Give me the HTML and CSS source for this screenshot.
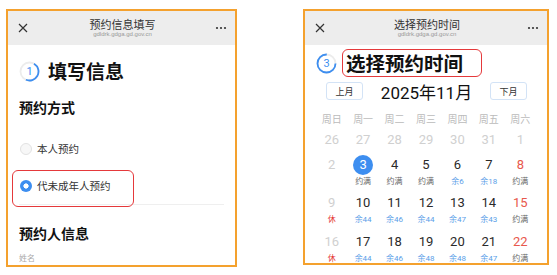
FILE: index.html
```html
<!DOCTYPE html>
<html lang="zh-CN">
<head>
<meta charset="utf-8">
<link rel="stylesheet" href="styles.css">
</head>
<body>
<div class="stage">
  <div class="phone phone-left">
    <div class="nav">
      <span class="nav-icon"><svg width="10" height="10" viewBox="0 0 10 10"><path d="M1 1L9 9M9 1L1 9" stroke="#333" stroke-width="1.2" fill="none"/></svg></span>
      <div class="nav-title"><div class="nav-name">预约信息填写</div><div class="nav-url">gdldrk.gdga.gd.gov.cn</div></div>
      <span class="nav-icon"><svg width="12" height="4" viewBox="0 0 12 4"><circle cx="2" cy="2" r="1.1" fill="#333"/><circle cx="6" cy="2" r="1.1" fill="#333"/><circle cx="10" cy="2" r="1.1" fill="#333"/></svg></span>
    </div>
    <div class="content">
      <div class="step">
        <svg class="step-ring" width="21" height="21" viewBox="0 0 21 21"><circle cx="10.5" cy="10.5" r="9" fill="none" stroke="#ececec" stroke-width="1.8"/><circle cx="10.5" cy="10.5" r="9" fill="none" stroke="#3d8ef0" stroke-width="1.8" stroke-dasharray="27 60" transform="rotate(-60 10.5 10.5)"/><text x="10.5" y="14.4" text-anchor="middle" class="ring-num">1</text></svg>
        <span class="step-title">填写信息</span>
      </div>
      <div class="section-title">预约方式</div>
      <div class="options">
        <div class="option"><span class="radio"></span><span>本人预约</span></div>
        <div class="option"><span class="radio on"></span><span>代未成年人预约</span><span class="mark"></span></div>
      </div>
      <div class="section-title second">预约人信息</div>
      <div class="field-label">姓名</div>
    </div>
  </div>

  <div class="phone phone-right">
    <div class="nav">
      <span class="nav-icon"><svg width="10" height="10" viewBox="0 0 10 10"><path d="M1 1L9 9M9 1L1 9" stroke="#333" stroke-width="1.2" fill="none"/></svg></span>
      <div class="nav-title"><div class="nav-name">选择预约时间</div><div class="nav-url">gdldrk.gdga.gd.gov.cn</div></div>
      <span class="nav-icon"><svg width="12" height="4" viewBox="0 0 12 4"><circle cx="2" cy="2" r="1.1" fill="#333"/><circle cx="6" cy="2" r="1.1" fill="#333"/><circle cx="10" cy="2" r="1.1" fill="#333"/></svg></span>
    </div>
    <div class="step step-right">
      <svg class="step-ring" width="21" height="21" viewBox="0 0 21 21"><circle cx="10.5" cy="10.5" r="9" fill="none" stroke="#ececec" stroke-width="1.8"/><circle cx="10.5" cy="10.5" r="9" fill="none" stroke="#3d8ef0" stroke-width="1.8" stroke-dasharray="42.4 60"/><text x="10.5" y="14.4" text-anchor="middle" class="ring-num">3</text></svg>
      <span class="step-title boxed">选择预约时间</span>
    </div>
    <div class="month-row">
      <span class="mbtn">上月</span>
      <span class="month">2025年11月</span>
      <span class="mbtn">下月</span>
    </div>
    <div class="weekdays">
      <span>周日</span><span>周一</span><span>周二</span><span>周三</span><span>周四</span><span>周五</span><span>周六</span>
    </div>
    <div class="cal">
      <div class="cell"><span class="num past">26</span></div>
      <div class="cell"><span class="num past">27</span></div>
      <div class="cell"><span class="num past">28</span></div>
      <div class="cell"><span class="num past">29</span></div>
      <div class="cell"><span class="num past">30</span></div>
      <div class="cell"><span class="num past">31</span></div>
      <div class="cell"><span class="num past">1</span></div>

      <div class="cell"><span class="num past">2</span><span class="lab"></span></div>
      <div class="cell"><span class="num"><span class="sel">3</span></span><span class="lab full">约满</span></div>
      <div class="cell"><span class="num">4</span><span class="lab full">约满</span></div>
      <div class="cell"><span class="num">5</span><span class="lab full">约满</span></div>
      <div class="cell"><span class="num">6</span><span class="lab left">余6</span></div>
      <div class="cell"><span class="num">7</span><span class="lab left">余18</span></div>
      <div class="cell"><span class="num wk">8</span><span class="lab full">约满</span></div>

      <div class="cell"><span class="num past">9</span><span class="lab rest">休</span></div>
      <div class="cell"><span class="num">10</span><span class="lab left">余44</span></div>
      <div class="cell"><span class="num">11</span><span class="lab left">余46</span></div>
      <div class="cell"><span class="num">12</span><span class="lab left">余44</span></div>
      <div class="cell"><span class="num">13</span><span class="lab left">余47</span></div>
      <div class="cell"><span class="num">14</span><span class="lab left">余43</span></div>
      <div class="cell"><span class="num wk">15</span><span class="lab full">约满</span></div>

      <div class="cell"><span class="num past">16</span><span class="lab rest">休</span></div>
      <div class="cell"><span class="num">17</span><span class="lab left">余44</span></div>
      <div class="cell"><span class="num">18</span><span class="lab left">余46</span></div>
      <div class="cell"><span class="num">19</span><span class="lab left">余48</span></div>
      <div class="cell"><span class="num">20</span><span class="lab left">余48</span></div>
      <div class="cell"><span class="num">21</span><span class="lab left">余47</span></div>
      <div class="cell"><span class="num wk">22</span><span class="lab full">约满</span></div>
    </div>
  </div>
</div>
</body>
</html>
```
FILE: styles.css
```css
html, body {
  margin: 0;
  padding: 0;
  background: #fff;
}
body {
  font-family: "Noto Sans CJK SC", "Noto Sans", sans-serif;
  color: #222;
}
.stage {
  display: flex;
  align-items: flex-start;
  gap: 66px;
  padding: 9px 0 0 6px;
}
.phone {
  box-sizing: border-box;
  border: 2px solid #f4a12e;
  overflow: hidden;
  background: #fff;
}
.phone-left {
  width: 231px;
  height: 258px;
}
.phone-right {
  width: 246px;
  height: 256px;
}
.nav {
  height: 34px;
  background: #ededed;
  display: grid;
  grid-template-columns: 30px 1fr 28px;
  align-items: center;
}
.nav-icon {
  display: flex;
  justify-content: center;
  align-items: center;
}
.nav-title {
  text-align: center;
}
.nav-name {
  font-size: 11px;
  line-height: 13px;
  color: #333;
}
.nav-url {
  font-family: "Liberation Sans", Arial, sans-serif;
  font-size: 6px;
  line-height: 7px;
  color: #999;
}
.content {
  padding: 0 11px;
}
.step {
  display: flex;
  align-items: center;
  gap: 8px;
  height: 32px;
  margin-top: 10px;
}
.step-ring {
  flex: none;
}
.ring-num {
  font-family: "Roboto", "Liberation Sans", sans-serif;
  font-size: 11px;
  fill: #3d8ef0;
}
.step-title {
  font-size: 19px;
  font-weight: 700;
  color: #111;
  line-height: 26px;
}
.section-title {
  font-size: 14px;
  font-weight: 700;
  line-height: 20px;
  margin-top: 10px;
  color: #111;
}
.section-title.second {
  margin-top: 18px;
}
.options {
  margin-top: 13px;
  border-bottom: 1px solid #efefef;
}
.option {
  position: relative;
  height: 37px;
  display: flex;
  align-items: center;
  gap: 5px;
  padding-left: 1px;
  font-size: 10.5px;
  color: #333;
}
.radio {
  box-sizing: border-box;
  width: 12px;
  height: 12px;
  border-radius: 50%;
  border: 1px solid #e2e2e2;
  background: #f7f7f7;
  flex: none;
}
.radio.on {
  border: none;
  background: radial-gradient(circle, #fff 0 2.3px, #3d8ef0 2.9px);
}
.mark {
  position: absolute;
  left: -7px;
  top: 3px;
  width: 122px;
  height: 37px;
  box-sizing: border-box;
  border: 1.5px solid #e5393b;
  border-radius: 6px;
}
.field-label {
  font-size: 8px;
  line-height: 12px;
  color: #aaa;
  margin-top: 9px;
}

/* right phone */
.step-right {
  margin-top: 3px;
  height: 30px;
  padding-left: 11px;
  gap: 4.5px;
}
.step-title.boxed {
  box-sizing: border-box;
  height: 28px;
  line-height: 25px;
  font-size: 19.5px;
  padding: 0 18px 0 3.5px;
  border: 1.5px solid #e5393b;
  border-radius: 6px;
}
.month-row {
  margin-top: 4px;
  height: 18px;
  padding: 0 20px 0 21px;
  display: flex;
  justify-content: space-between;
  align-items: center;
}
.mbtn {
  box-sizing: border-box;
  width: 37px;
  height: 18px;
  border: 1px solid #d3e3f6;
  border-radius: 3px;
  font-size: 9px;
  color: #333;
  display: flex;
  align-items: center;
  justify-content: center;
}
.month {
  font-family: "Roboto", "Noto Sans CJK SC", sans-serif;
  font-size: 17px;
  color: #111;
}
.weekdays {
  margin-top: 8px;
  padding: 0 11px;
  height: 20px;
  display: grid;
  grid-template-columns: repeat(7, 1fr);
  align-items: center;
  justify-items: center;
  font-size: 10px;
  color: #bbb;
}
.cal {
  margin-top: 2px;
  padding: 0 11px;
  display: grid;
  grid-template-columns: repeat(7, 1fr);
  row-gap: 4.5px;
  font-family: "Roboto", "Noto Sans CJK SC", sans-serif;
}
.cell {
  display: flex;
  flex-direction: column;
  align-items: center;
}
.num {
  height: 20px;
  line-height: 20px;
  font-size: 13px;
  color: #2a2a2a;
  display: flex;
  align-items: center;
  justify-content: center;
}
.num.past {
  color: #d0d0d0;
}
.num.wk {
  color: #e8584c;
}
.sel {
  width: 20px;
  height: 20px;
  border-radius: 50%;
  background: #3d8ef0;
  color: #fff;
  display: flex;
  align-items: center;
  justify-content: center;
}
.lab {
  height: 14px;
  line-height: 14px;
  font-size: 8px;
}
.lab.full {
  color: #666;
}
.lab.left {
  color: #5b9ee8;
}
.lab.rest {
  color: #e53935;
}
```
